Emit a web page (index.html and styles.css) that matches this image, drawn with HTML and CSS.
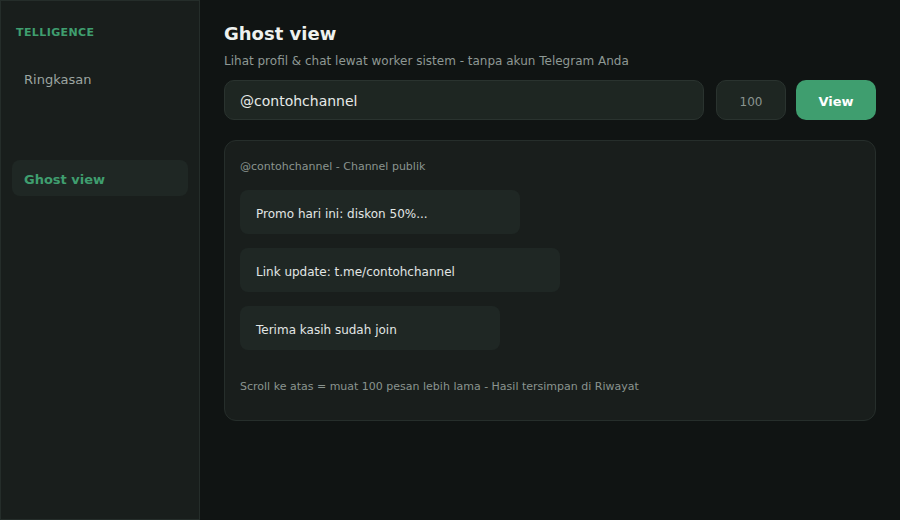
FILE: index.html
```html
<!DOCTYPE html>
<html>
<head>
<meta charset="utf-8">
<link rel="stylesheet" href="styles.css">
</head>
<body>
<div class="app">
  <aside class="sidebar">
    <div class="brand">TELLIGENCE</div>
    <nav class="nav">
      <div class="nav-item">Ringkasan</div>
      <div class="nav-item active">Ghost view</div>
    </nav>
  </aside>
  <main class="main">
    <h1 class="title">Ghost view</h1>
    <p class="subtitle">Lihat profil &amp; chat lewat worker sistem - tanpa akun Telegram Anda</p>
    <div class="search-row">
      <div class="field">@contohchannel</div>
      <div class="limit">100</div>
      <button class="btn">View</button>
    </div>
    <section class="card">
      <div class="card-head">@contohchannel - Channel publik</div>
      <div class="messages">
        <div class="msg msg-a">Promo hari ini: diskon 50%...</div>
        <div class="msg msg-b">Link update: t.me/contohchannel</div>
        <div class="msg msg-c">Terima kasih sudah join</div>
      </div>
      <div class="card-foot">Scroll ke atas = muat 100 pesan lebih lama - Hasil tersimpan di Riwayat</div>
    </section>
  </main>
</div>
</body>
</html>
```

FILE: styles.css
```css
* { box-sizing: border-box; }
html, body { margin: 0; padding: 0; }
body {
  width: 900px;
  height: 520px;
  background: #101413;
  font-family: "DejaVu Sans", sans-serif;
  overflow: hidden;
}
.app {
  display: flex;
  height: 520px;
}
.sidebar {
  width: 200px;
  flex: none;
  background: #191e1c;
  border: 1px solid #252d2a;
  padding: 24px 11px 0 11px;
}
.brand {
  font-size: 11px;
  font-weight: bold;
  letter-spacing: 0.4px;
  color: #3f9e6f;
  line-height: 16px;
  padding-left: 4px;
}
.nav {
  display: flex;
  flex-direction: column;
  gap: 63px;
  margin-top: 20px;
}
.nav-item {
  height: 36px;
  padding-top: 2px;
  line-height: 34px;
  padding-left: 12px;
  font-size: 13px;
  color: #9ca5a1;
  border-radius: 8px;
}
.nav-item.active {
  background: #1f2724;
  color: #3f9e6f;
  font-weight: bold;
  padding-top: 3px;
  line-height: 33px;
}
.main {
  flex: 1;
  padding: 20px 24px 0 24px;
}
.title {
  margin: 0;
  font-size: 18px;
  line-height: 28px;
  font-weight: bold;
  color: #eef1ef;
}
.subtitle {
  margin: 5px 0 0;
  font-size: 12px;
  line-height: 16px;
  color: #8e9894;
}
.search-row {
  display: flex;
  gap: 10px;
  margin-top: 11px;
  height: 40px;
}
.field {
  flex: 1;
  background: #1e2622;
  border: 1px solid #2a332f;
  border-radius: 10px;
  padding-left: 15px;
  padding-top: 1px;
  line-height: 38px;
  font-size: 14px;
  color: #e6eae8;
}
.limit {
  width: 70px;
  margin-left: 2px;
  background: #1e2622;
  border: 1px solid #2a332f;
  border-radius: 10px;
  text-align: center;
  padding-top: 2px;
  line-height: 38px;
  font-size: 12px;
  color: #8a948f;
}
.btn {
  width: 80px;
  border: none;
  border-radius: 10px;
  background: #3f9e6f;
  color: #ffffff;
  font-family: "DejaVu Sans", sans-serif;
  font-size: 13px;
  font-weight: bold;
  padding: 2px 0 0;
}
.card {
  margin-top: 20px;
  background: #191e1c;
  border: 1px solid #262e2b;
  border-radius: 12px;
  padding: 16px 15px 23px 15px;
}
.card-head {
  font-size: 11px;
  line-height: 20px;
  color: #8a948f;
}
.messages {
  display: flex;
  flex-direction: column;
  align-items: flex-start;
  gap: 14px;
  margin-top: 13px;
}
.msg {
  height: 44px;
  padding-top: 4px;
  line-height: 40px;
  padding-left: 16px;
  background: #1f2724;
  border-radius: 8px;
  font-size: 12px;
  color: #e2e6e4;
}
.msg-a { width: 280px; }
.msg-b { width: 320px; }
.msg-c { width: 260px; }
.card-foot {
  margin-top: 27px;
  font-size: 11px;
  line-height: 20px;
  color: #8a948f;
}
```
